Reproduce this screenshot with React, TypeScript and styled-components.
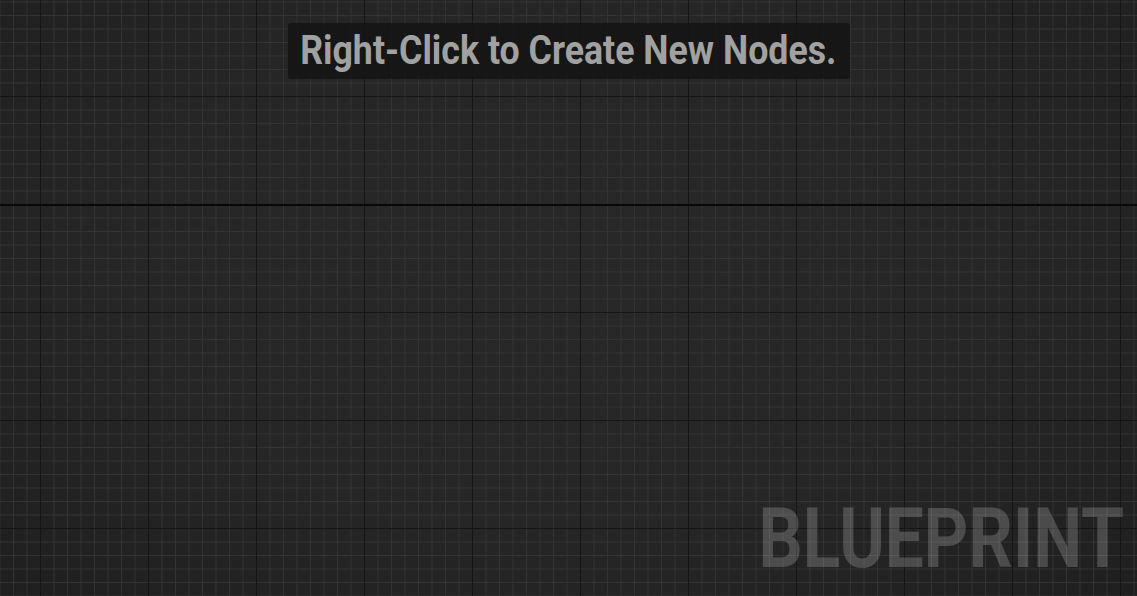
import React from "react";
import styled, { createGlobalStyle } from "styled-components";

const Global = createGlobalStyle`
  html, body { margin: 0; padding: 0; background: #262626; }
  #root { width: 1137px; height: 596px; }
`;

const Canvas = styled.div`
  position: relative;
  width: 1137px;
  height: 596px;
  overflow: hidden;
  display: flex;
  flex-direction: column;
  align-items: center;
  justify-content: space-between;
  box-sizing: border-box;
  padding: 23px 13px 16px;
  font-family: Roboto, "Noto Sans", sans-serif;
  background-color: #262626;
  background-image:
    linear-gradient(to bottom, transparent 204px, #080808 204px, #080808 206px, transparent 206px),
    linear-gradient(to right, #151515 1px, transparent 1px),
    linear-gradient(to bottom, #151515 1px, transparent 1px),
    linear-gradient(to right, #333333 1px, transparent 1px),
    linear-gradient(to bottom, #333333 1px, transparent 1px),
    radial-gradient(ellipse at 50% 45%, #282828 0%, #262626 55%, #1f1f1f 100%);
  background-size:
    100% 100%,
    108px 108px,
    108px 108px,
    13.5px 13.5px,
    13.5px 13.5px,
    100% 100%;
  background-position:
    0 0,
    40px 0,
    0 96px,
    13px 0,
    0 15px,
    0 0;
`;

const Hint = styled.div`
  width: 562px;
  height: 56px;
  background: rgba(20, 20, 20, 0.85);
  border-radius: 3px;
  display: flex;
  align-items: center;
  justify-content: center;
`;

const HintText = styled.span`
  display: inline-block;
  color: #a1a1a1;
  font-weight: 700;
  font-size: 40px;
  line-height: 1;
  white-space: nowrap;
  transform: scaleX(0.893);
  transform-origin: center center;
`;

const Watermark = styled.div`
  align-self: flex-end;
  color: rgba(255, 255, 255, 0.19);
  font-weight: 700;
  font-size: 82.5px;
  line-height: 1;
  white-space: nowrap;
  transform: scaleX(0.84);
  transform-origin: right center;
`;

export default function App() {
  return (
    <>
      <Global />
      <Canvas>
        <Hint>
          <HintText>Right-Click to Create New Nodes.</HintText>
        </Hint>
        <Watermark>BLUEPRINT</Watermark>
      </Canvas>
    </>
  );
}
